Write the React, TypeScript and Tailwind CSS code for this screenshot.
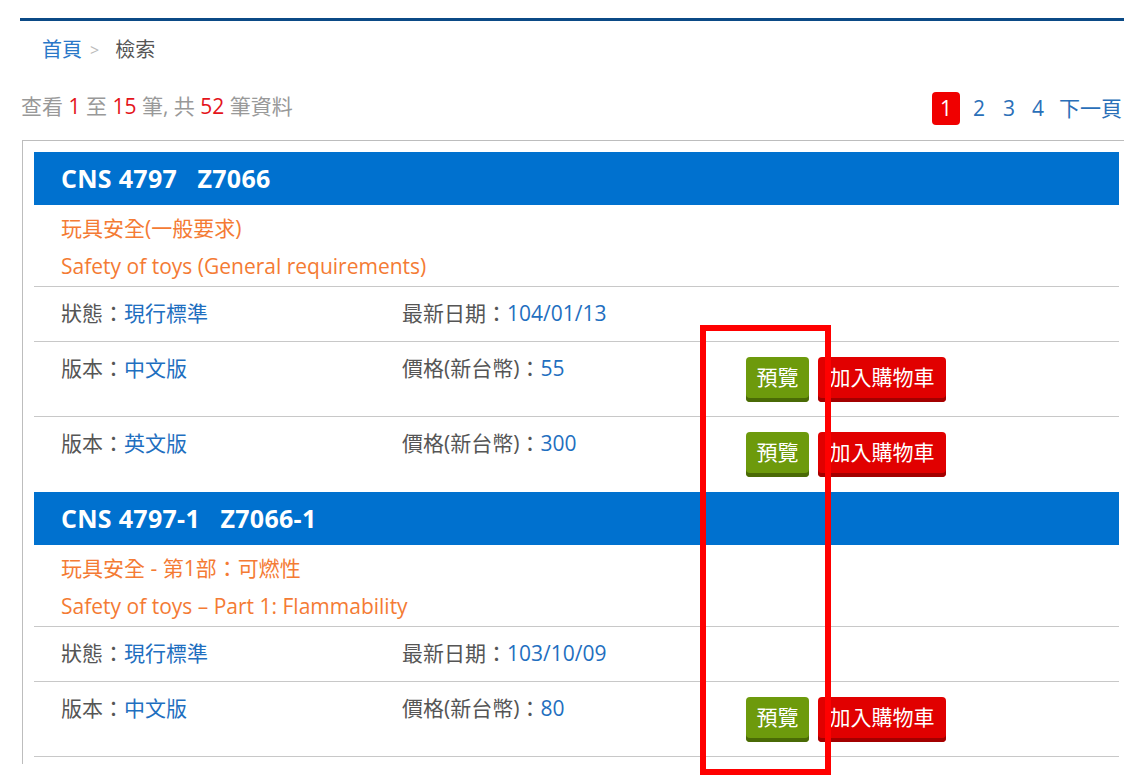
import React from 'react'

type Edition = { name: string; price: string }
type Standard = {
  code: string
  zh: string
  en: string
  status: string
  date: string
  editions: Edition[]
}

const standards: Standard[] = [
  {
    code: 'CNS 4797\u00a0\u00a0\u00a0Z7066',
    zh: '玩具安全(一般要求)',
    en: 'Safety of toys (General requirements)',
    status: '現行標準',
    date: '104/01/13',
    editions: [
      { name: '中文版', price: '55' },
      { name: '英文版', price: '300' },
    ],
  },
  {
    code: 'CNS 4797-1\u00a0\u00a0\u00a0Z7066-1',
    zh: '玩具安全 - 第1部：可燃性',
    en: 'Safety of toys – Part 1: Flammability',
    status: '現行標準',
    date: '103/10/09',
    editions: [{ name: '中文版', price: '80' }],
  },
]

const font = { fontFamily: '"Open Sans", "Noto Sans CJK TC", sans-serif' }

function Buttons() {
  return (
    <div className="flex items-center gap-[9px]">
      <button className="h-[45px] w-[63px] rounded-[4px] bg-[#6d9a0c] pb-[3px] text-[21px] text-white shadow-[inset_0_-4px_0_#4a6a06]">
        預覽
      </button>
      <button className="h-[45px] w-[128px] rounded-[4px] bg-[#e10000] pb-[3px] text-[21px] text-white shadow-[inset_0_-4px_0_#a30000]">
        加入購物車
      </button>
    </div>
  )
}

function StandardBlock({ s, last }: { s: Standard; last: boolean }) {
  return (
    <div>
      <div className="flex h-[53px] items-center bg-[#0071cf] pl-[27px] text-[25px] font-bold tracking-[0.3px] text-white">
        {s.code}
      </div>
      <div className="border-b border-[#c8c8c8] pb-[1px] pl-[27px] pt-[4px] text-[21px] leading-[38px] text-[#f47b34]">
        <div>{s.zh}</div>
        <div>{s.en}</div>
      </div>
      <div className="flex h-[55px] items-center border-b border-[#c8c8c8] pl-[27px] text-[21px] text-[#555]">
        <div className="w-[341px]">
          狀態：<span className="text-[#1f6fc0]">{s.status}</span>
        </div>
        <div>
          最新日期：<span className="text-[#1f6fc0]">{s.date}</span>
        </div>
      </div>
      {s.editions.map((e, i) => (
        <div
          key={i}
          className={`flex h-[75px] pl-[27px] text-[21px] text-[#555] ${
            i < s.editions.length - 1 || last ? 'border-b border-[#c8c8c8]' : ''
          }`}
        >
          <div className="w-[341px] pt-[11px] leading-[30px]">
            版本：<span className="text-[#1f6fc0]">{e.name}</span>
          </div>
          <div className="w-[344px] pt-[11px] leading-[30px]">
            價格(新台幣)：<span className="text-[#1f6fc0]">{e.price}</span>
          </div>
          <div className="flex items-center">
            <Buttons />
          </div>
        </div>
      ))}
    </div>
  )
}

export default function App() {
  return (
    <div className="relative min-h-[783px] bg-white" style={font}>
      <div className="ml-[20px] w-[1104px] pt-[18px]">
        <div className="h-[3px] bg-[#0b4a86]" />

        {/* breadcrumb */}
        <div className="mt-[17px] flex items-center pl-[22px] text-[20px] leading-[24px]">
          <span className="text-[#2a78c8]">首頁</span>
          <span className="ml-[8px] mr-[16px] text-[16px] text-[#bbb]">&gt;</span>
          <span className="text-[#555]">檢索</span>
        </div>

        {/* summary + pagination */}
        <div className="mt-[30px] flex h-[33px] items-center justify-between">
          <div className="-mt-[4px] pl-[1px] text-[21px] text-[#999]">
            查看 <span className="text-[#e4141b]">1</span> 至{' '}
            <span className="text-[#e4141b]">15</span> 筆, 共{' '}
            <span className="text-[#e4141b]">52</span> 筆資料
          </div>
          <div className="flex items-center text-[21px] text-[#2a6fb8]">
            <span className="flex h-[33px] w-[28px] items-center justify-center rounded-[4px] bg-[#f00000] text-white">
              1
            </span>
            <span className="ml-[13px]">2</span>
            <span className="ml-[18px]">3</span>
            <span className="ml-[17px]">4</span>
            <span className="ml-[15px] mr-[2px]">下一頁</span>
          </div>
        </div>

        {/* list */}
        <div className="ml-[2px] mt-[15px] h-[624px] border-l border-t border-[#bdbdbd] pl-[11px] pr-[5px] pt-[11px]">
          {standards.map((s, i) => (
            <StandardBlock key={i} s={s} last={i === standards.length - 1} />
          ))}
        </div>
      </div>

      {/* annotation */}
      <div className="pointer-events-none absolute left-[700px] top-[325px] h-[450px] w-[131px] border-[6px] border-[#ff0000]" />
    </div>
  )
}
